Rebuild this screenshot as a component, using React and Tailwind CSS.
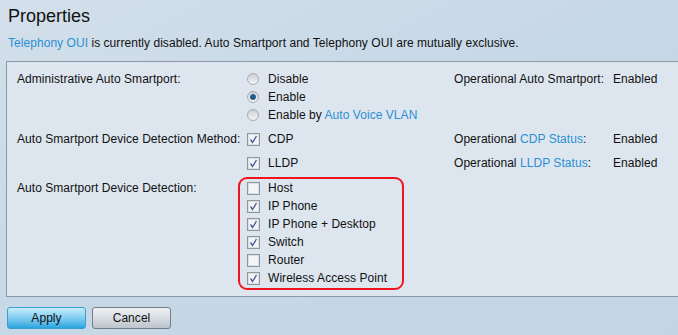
import React from 'react';

function Radio({ checked }) {
    return (
        <svg width="12" height="12" viewBox="0 0 12 12" className="shrink-0">
            <defs>
                <linearGradient id={checked ? 'rg-on' : 'rg-off'} x1="0" y1="0" x2="0" y2="1">
                    <stop offset="0" stopColor="#c9ced3" />
                    <stop offset="1" stopColor="#f6f7f8" />
                </linearGradient>
            </defs>
            <circle cx="6" cy="6" r="5.5" fill={`url(#${checked ? 'rg-on' : 'rg-off'})`} stroke="#a3abb3" />
            {checked && <circle cx="6" cy="6" r="2.6" fill="#1d5f95" stroke="#0f3d66" strokeWidth="0.6" />}
        </svg>
    );
}

function Check({ checked }) {
    return (
        <svg width="13" height="13" viewBox="0 0 13 13" className="shrink-0">
            <rect x="0.5" y="0.5" width="12" height="12" fill="#f3f4f5" stroke="#8e969e" />
            <rect x="1.5" y="1.5" width="10" height="10" fill="none" stroke="#dcdfe2" />
            {checked && <path d="M3.5 6.5 L5.5 9.5 L9.5 3" fill="none" stroke="#4b5c94" strokeWidth="1.4" />}
        </svg>
    );
}

function Line({ children }) {
    return <div className="h-[18px] flex items-center whitespace-nowrap">{children}</div>;
}

const blue = 'text-[#2b8fd3]';

export default function App() {
    const devices = [
        ['Host', false],
        ['IP Phone', true],
        ['IP Phone + Desktop', true],
        ['Switch', true],
        ['Router', false],
        ['Wireless Access Point', true],
    ];

    return (
        <div className="w-[678px] h-[335px] overflow-hidden bg-gradient-to-br from-[#d3e0eb] via-[#c6d7e6] to-[#c4d5e4] text-[12px] tracking-[0.05px] text-[#111] font-['Liberation_Sans',Arial,sans-serif]">
            <h1 className="pl-[8px] pt-[4px] h-[28px] text-[18px] leading-[24px] tracking-normal text-[#111]">Properties</h1>
            <p className="pl-[8px] pt-[8px] h-[33px] leading-[14px] whitespace-nowrap">
                <span className={blue}>Telephony OUI</span> is currently disabled. Auto Smartport and Telephony OUI are mutually exclusive.
            </p>

            <div className="ml-[6px] border-l border-t border-b border-[#8999a7] bg-[#dde6ef] pl-[10px] pt-[8px] pb-[6px]">
                {/* Administrative Auto Smartport */}
                <div className="flex">
                    <div className="w-[221px] shrink-0"><Line>Administrative Auto Smartport:</Line></div>
                    <div className="w-[216px] shrink-0 pl-[9px]">
                        <Line><span className="flex items-center gap-[9px]"><Radio /> Disable</span></Line>
                        <Line><span className="flex items-center gap-[9px]"><Radio checked /> Enable</span></Line>
                        <Line><span className="flex items-center gap-[9px]"><Radio /> <span>Enable by <span className={blue}>Auto Voice VLAN</span></span></span></Line>
                    </div>
                    <div className="flex">
                        <div className="w-[159px]"><Line>Operational Auto Smartport:</Line></div>
                        <Line>Enabled</Line>
                    </div>
                </div>

                {/* Detection method */}
                <div className="flex mt-[6px]">
                    <div className="w-[221px] shrink-0"><Line>Auto Smartport Device Detection Method:</Line></div>
                    <div className="w-[216px] shrink-0 pl-[9px]">
                        <Line><span className="flex items-center gap-[8px]"><Check checked /> CDP</span></Line>
                    </div>
                    <div className="flex">
                        <div className="w-[159px]"><Line><span>Operational <span className={blue}>CDP Status</span>:</span></Line></div>
                        <Line>Enabled</Line>
                    </div>
                </div>
                <div className="flex mt-[6px]">
                    <div className="w-[221px] shrink-0" />
                    <div className="w-[216px] shrink-0 pl-[9px]">
                        <Line><span className="flex items-center gap-[8px]"><Check checked /> LLDP</span></Line>
                    </div>
                    <div className="flex">
                        <div className="w-[159px]"><Line><span>Operational <span className={blue}>LLDP Status</span>:</span></Line></div>
                        <Line>Enabled</Line>
                    </div>
                </div>

                {/* Device detection */}
                <div className="flex mt-[5px]">
                    <div className="w-[221px] shrink-0 pt-[2px]"><Line>Auto Smartport Device Detection:</Line></div>
                    <div className="w-[166px] border-2 border-[#f0141e] rounded-[9px] pl-[7px] pb-[1px]">
                        {devices.map(([name, on]) => (
                            <Line key={name}><span className="flex items-center gap-[8px]"><Check checked={on} /> {name}</span></Line>
                        ))}
                    </div>
                </div>
            </div>

            <div className="flex gap-[6px] pl-[7px] pt-[10px]">
                <button className="w-[79px] h-[22px] rounded-[3px] border border-[#3c9fd2] bg-gradient-to-b from-[#c6ecfb] via-[#7fcdf0] to-[#25a5de] text-[12px] text-[#111] leading-none">Apply</button>
                <button className="w-[79px] h-[22px] rounded-[3px] border border-[#737d86] bg-gradient-to-b from-[#eef1f3] via-[#d7dde2] to-[#bcc5cc] text-[12px] text-[#111] leading-none">Cancel</button>
            </div>
        </div>
    );
}
